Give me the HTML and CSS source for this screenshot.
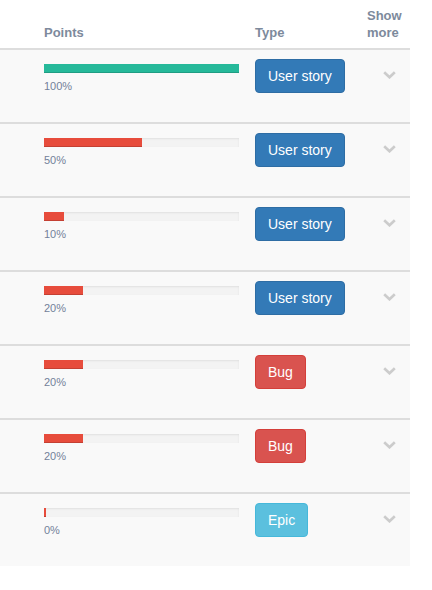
FILE: index.html
```html
<!DOCTYPE html>
<html>
<head>
<meta charset="utf-8">
<link rel="stylesheet" href="styles.css">
</head>
<body>
<div class="tbl">
  <div class="head">
    <div class="h-points">Points</div>
    <div class="h-type">Type</div>
    <div class="h-more">Show<br>more</div>
  </div>

  <div class="row">
    <div class="c-points">
      <div class="track"><div class="fill green" style="width:100%"></div></div>
      <div class="pct">100%</div>
    </div>
    <div class="c-type"><span class="btn story">User story</span></div>
    <div class="c-more"><svg class="chev" width="13" height="8" viewBox="0 0 13 8"><polyline points="1.2,1.2 6.5,6.3 11.8,1.2" fill="none" stroke="#cccccc" stroke-width="2.6"/></svg></div>
  </div>

  <div class="row">
    <div class="c-points">
      <div class="track"><div class="fill red" style="width:50%"></div></div>
      <div class="pct">50%</div>
    </div>
    <div class="c-type"><span class="btn story">User story</span></div>
    <div class="c-more"><svg class="chev" width="13" height="8" viewBox="0 0 13 8"><polyline points="1.2,1.2 6.5,6.3 11.8,1.2" fill="none" stroke="#cccccc" stroke-width="2.6"/></svg></div>
  </div>

  <div class="row">
    <div class="c-points">
      <div class="track"><div class="fill red" style="width:10%"></div></div>
      <div class="pct">10%</div>
    </div>
    <div class="c-type"><span class="btn story">User story</span></div>
    <div class="c-more"><svg class="chev" width="13" height="8" viewBox="0 0 13 8"><polyline points="1.2,1.2 6.5,6.3 11.8,1.2" fill="none" stroke="#cccccc" stroke-width="2.6"/></svg></div>
  </div>

  <div class="row">
    <div class="c-points">
      <div class="track"><div class="fill red" style="width:20%"></div></div>
      <div class="pct">20%</div>
    </div>
    <div class="c-type"><span class="btn story">User story</span></div>
    <div class="c-more"><svg class="chev" width="13" height="8" viewBox="0 0 13 8"><polyline points="1.2,1.2 6.5,6.3 11.8,1.2" fill="none" stroke="#cccccc" stroke-width="2.6"/></svg></div>
  </div>

  <div class="row">
    <div class="c-points">
      <div class="track"><div class="fill red" style="width:20%"></div></div>
      <div class="pct">20%</div>
    </div>
    <div class="c-type"><span class="btn bug">Bug</span></div>
    <div class="c-more"><svg class="chev" width="13" height="8" viewBox="0 0 13 8"><polyline points="1.2,1.2 6.5,6.3 11.8,1.2" fill="none" stroke="#cccccc" stroke-width="2.6"/></svg></div>
  </div>

  <div class="row">
    <div class="c-points">
      <div class="track"><div class="fill red" style="width:20%"></div></div>
      <div class="pct">20%</div>
    </div>
    <div class="c-type"><span class="btn bug">Bug</span></div>
    <div class="c-more"><svg class="chev" width="13" height="8" viewBox="0 0 13 8"><polyline points="1.2,1.2 6.5,6.3 11.8,1.2" fill="none" stroke="#cccccc" stroke-width="2.6"/></svg></div>
  </div>

  <div class="row last">
    <div class="c-points">
      <div class="track"><div class="fill red zero" style="width:0%"></div></div>
      <div class="pct">0%</div>
    </div>
    <div class="c-type"><span class="btn epic">Epic</span></div>
    <div class="c-more"><svg class="chev" width="13" height="8" viewBox="0 0 13 8"><polyline points="1.2,1.2 6.5,6.3 11.8,1.2" fill="none" stroke="#cccccc" stroke-width="2.6"/></svg></div>
  </div>
</div>
</body>
</html>
```

FILE: styles.css
```css
html, body {
  margin: 0;
  padding: 0;
  background: #ffffff;
}

body {
  font-family: "Liberation Sans", Arial, sans-serif;
}

.tbl {
  width: 410px;
}

.head {
  display: flex;
  align-items: flex-end;
  height: 41px;
  padding-top: 7px;
  border-bottom: 2px solid #dddddd;
  font-size: 13px;
  font-weight: bold;
  line-height: 17px;
  color: #7d8a9c;
}

.head > div {
  padding-bottom: 7px;
}

.h-points {
  margin-left: 44px;
  width: 211px;
}

.h-type {
  width: 112px;
}

.h-more {
  width: 43px;
}

.row {
  display: flex;
  height: 72px;
  background: #f9f9f9;
  border-bottom: 2px solid #dddddd;
}

.row.last {
  border-bottom: none;
}

.c-points {
  margin-left: 44px;
  width: 195px;
  padding-top: 14px;
}

.track {
  height: 9px;
  background: #f3f3f3;
  box-shadow: inset 0 1px 2px rgba(0, 0, 0, 0.08);
  overflow: hidden;
}

.fill {
  height: 100%;
  box-shadow: inset 0 -1px 0 rgba(0, 0, 0, 0.15);
}

.fill.green {
  background: #26b99a;
}

.fill.red {
  background: #e74c3c;
}

.fill.zero {
  min-width: 2px;
}

.pct {
  margin-top: 6px;
  font-size: 11px;
  line-height: 14px;
  color: #73819a;
}

.c-type {
  margin-left: 16px;
  width: 112px;
  padding-top: 9px;
}

.btn {
  display: inline-block;
  padding: 6px 12px;
  font-size: 14px;
  line-height: 20px;
  color: #ffffff;
  border: 1px solid transparent;
  border-radius: 4px;
  white-space: nowrap;
}

.btn.story {
  background: #337ab7;
  border-color: #2e6da4;
}

.btn.bug {
  background: #d9534f;
  border-color: #d43f3a;
}

.btn.epic {
  background: #5bc0de;
  border-color: #46b8da;
}

.c-more {
  width: 43px;
  padding-top: 21px;
  padding-left: 16px;
  box-sizing: border-box;
}

.chev {
  display: block;
}
```
